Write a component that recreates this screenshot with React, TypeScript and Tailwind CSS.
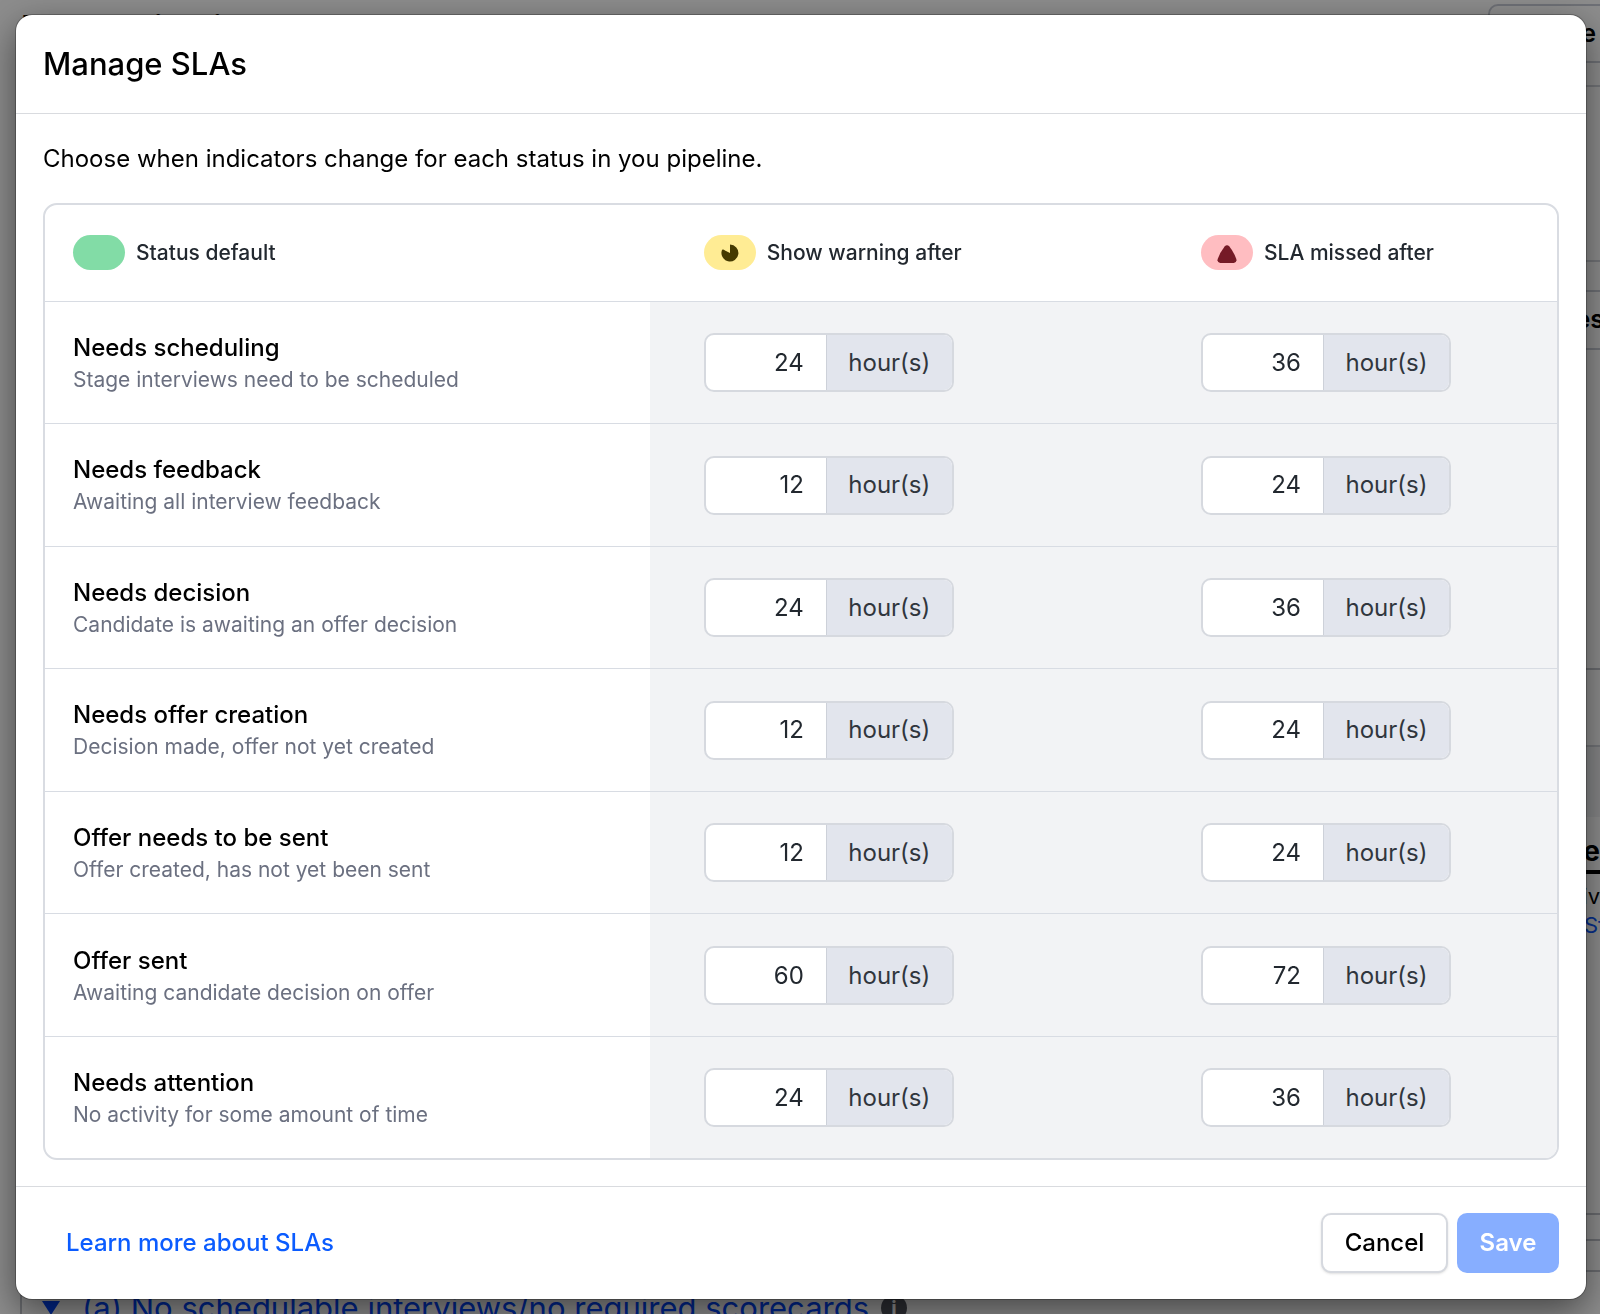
import { useState } from "react";

const statuses = [
  { title: "Needs scheduling", description: "Stage interviews need to be scheduled", warning: 24, missed: 36 },
  { title: "Needs feedback", description: "Awaiting all interview feedback", warning: 12, missed: 24 },
  { title: "Needs decision", description: "Candidate is awaiting an offer decision", warning: 24, missed: 36 },
  { title: "Needs offer creation", description: "Decision made, offer not yet created", warning: 12, missed: 24 },
  { title: "Offer needs to be sent", description: "Offer created, has not yet been sent", warning: 12, missed: 24 },
  { title: "Offer sent", description: "Awaiting candidate decision on offer", warning: 60, missed: 72 },
  { title: "Needs attention", description: "No activity for some amount of time", warning: 24, missed: 36 },
];

function WarningIcon() {
  return (
    <svg width="18" height="18" viewBox="0 0 18 18" className="mt-px" aria-hidden="true">
      <path d="M9 9V0.5A8.5 8.5 0 1 1 0.9 6.2Q1.3 5.1 2.3 5.6Z" fill="#453a00" />
    </svg>
  );
}

function MissedIcon() {
  return (
    <svg width="20" height="18" viewBox="0 0 20 18" className="mt-[3px]" aria-hidden="true">
      <path
        d="M7.6 1.6Q10 -1.2 12.4 1.6Q17 7.5 19.3 14Q20.2 17.5 16.8 18H3.2Q-0.2 17.5 0.7 14Q3 7.5 7.6 1.6Z"
        fill="#751a26"
      />
    </svg>
  );
}

function HoursInput({ label, initial }: { label: string; initial: number }) {
  const [hours, setHours] = useState(String(initial));

  return (
    <label className="flex h-[59px] w-[250px] overflow-hidden rounded-[10px] border-2 border-[#d6d9df] bg-white text-[24px]">
      <input
        type="text"
        inputMode="numeric"
        aria-label={label}
        value={hours}
        onChange={(e) => setHours(e.target.value)}
        className="w-[120px] pr-[22px] text-right text-[#22282f] outline-none"
      />
      <span className="flex flex-1 items-center justify-center border-l border-[#cdd1d9] bg-[#e2e5ed] text-[#30363d]">
        hour(s)
      </span>
    </label>
  );
}

function PipelinePage() {
  return (
    <div className="h-screen overflow-hidden bg-white pl-5" aria-hidden="true">
      <header className="flex h-[85px] items-start justify-between pt-1">
        <h1 className="pt-[3px] pl-0.5 text-[34px] leading-[42px] font-semibold">Talent Pipeline</h1>
        <div className="-mr-3 flex h-[59px] w-[124px] items-center justify-end rounded-[10px] border-2 border-[#c8ccd6] pr-[14px] text-[25px] font-semibold">
          Create
        </div>
      </header>
      <div className="flex h-[177px] border-y-2 border-[#d0d3da]" />
      <div className="flex h-[408px] items-start justify-end border-b-2 border-[#c0c3ca] pt-[28px]">
        <div className="-mr-[26px] flex h-[60px] items-center rounded-[10px] border-2 border-[#c8ccd6] px-5 text-[25px] font-semibold">
          Sources
        </div>
      </div>
      <div className="h-[77px] border-b-2 border-[#d0d3da]" />
      <div className="h-[70px] bg-[#f2f3f5]" />
      <div className="flex h-[398px] justify-end border-b-2 border-[#c0c3ca] pt-[15px]">
        <div className="w-[100px] text-[22px] leading-[29px]">
          <p className="border-b-4 border-black text-right text-[28px] leading-[38px] font-bold">Active</p>
          <p className="mt-2 text-right">Archiv</p>
          <a href="#stage" className="block pl-[84px] text-[#0b57ff]">Stage</a>
        </div>
      </div>
      <div className="h-[26px] border-b-2 border-[#c0c3ca]" />
      <div className="h-[31px] border-b-2 border-[#c0c3ca]" />
      <div className="flex items-center gap-[22px] border-l-2 border-[#c0c3ca] pt-[14px] pl-5 text-[31px] leading-[44px] text-[#0046ff]">
        <svg width="18" height="18" viewBox="0 0 18 18">
          <path d="M0 2H18L9 16Z" fill="currentColor" />
        </svg>
        <div className="flex items-center gap-3">
          <a href="#scorecards">(a) No schedulable interviews/no required scorecards</a>
          <span className="flex size-[26px] items-center justify-center rounded-full bg-[#50535c] text-[20px] leading-none font-bold text-white">
            i
          </span>
        </div>
      </div>
    </div>
  );
}

export default function App() {
  return (
    <div className="font-[Inter,sans-serif] text-black">
      <PipelinePage />

      <div className="fixed inset-0 flex bg-black/45 py-[15px] pr-[14px] pl-4">
        <div
          role="dialog"
          aria-labelledby="sla-title"
          className="flex w-full flex-col overflow-hidden rounded-[16px] bg-white shadow-[0_0_0_1px_rgba(0,0,0,0.25),0_12px_36px_rgba(0,0,0,0.5)]"
        >
          <header className="flex h-[99px] shrink-0 items-center border-b border-[#d9dbdf] px-[27px]">
            <h2 id="sla-title" className="text-[31px] leading-[40px] font-medium">
              Manage SLAs
            </h2>
          </header>

          <div className="flex min-h-0 flex-1 flex-col gap-[28px] px-[27px] pt-[29px] pb-[26px]">
            <p className="text-[24px] leading-[32px]">
              Choose when indicators change for each status in you pipeline.
            </p>

            <div className="min-h-0 flex-1 overflow-hidden rounded-[14px] border-2 border-[#d9dce2]">
              <table className="h-full w-full table-fixed text-left">
                <thead>
                  <tr className="h-[96px] text-[21px] text-[#22282f]">
                    <th scope="col" className="w-2/5 pl-7 font-medium">
                      <div className="flex items-center gap-[11px]">
                        <span className="h-[35px] w-[52px] rounded-full bg-[#82dca6]" />
                        Status default
                      </div>
                    </th>
                    <th scope="col" className="pl-[54px] font-medium">
                      <div className="flex items-center gap-[11px]">
                        <span className="flex h-[35px] w-[52px] items-center justify-center rounded-full bg-[#ffec94]">
                          <WarningIcon />
                        </span>
                        Show warning after
                      </div>
                    </th>
                    <th scope="col" className="w-[410px] pl-[54px] font-medium">
                      <div className="flex items-center gap-[11px]">
                        <span className="flex h-[35px] w-[52px] items-center justify-center rounded-full bg-[#ffbdc1]">
                          <MissedIcon />
                        </span>
                        SLA missed after
                      </div>
                    </th>
                  </tr>
                </thead>
                <tbody>
                  {statuses.map((status) => (
                    <tr key={status.title} className="border-t border-[#d8dce3]">
                      <th scope="row" className="pt-[3px] pl-7 font-normal">
                        <p className="text-[24px] leading-[32px] font-medium">{status.title}</p>
                        <p className="text-[21px] leading-[32px] text-[#6b7080]">{status.description}</p>
                      </th>
                      <td className="bg-[#f2f3f5] pt-px pl-[54px]">
                        <HoursInput label={`${status.title}: show warning after`} initial={status.warning} />
                      </td>
                      <td className="bg-[#f2f3f5] pt-px pl-[54px]">
                        <HoursInput label={`${status.title}: SLA missed after`} initial={status.missed} />
                      </td>
                    </tr>
                  ))}
                </tbody>
              </table>
            </div>
          </div>

          <footer className="flex h-[113px] shrink-0 items-center justify-between border-t border-[#d9dbdf] pr-[27px] pl-[50px] text-[24px] font-medium">
            <a href="#learn" className="text-[#0b5cff]">
              Learn more about SLAs
            </a>
            <div className="flex gap-[9px]">
              <button
                type="button"
                className="h-[60px] w-[127px] rounded-[10px] border-2 border-[#d6d9df] bg-white shadow-sm"
              >
                Cancel
              </button>
              <button type="button" disabled className="h-[60px] w-[102px] rounded-[10px] bg-[#87aeff] font-semibold text-white">
                Save
              </button>
            </div>
          </footer>
        </div>
      </div>
    </div>
  );
}
